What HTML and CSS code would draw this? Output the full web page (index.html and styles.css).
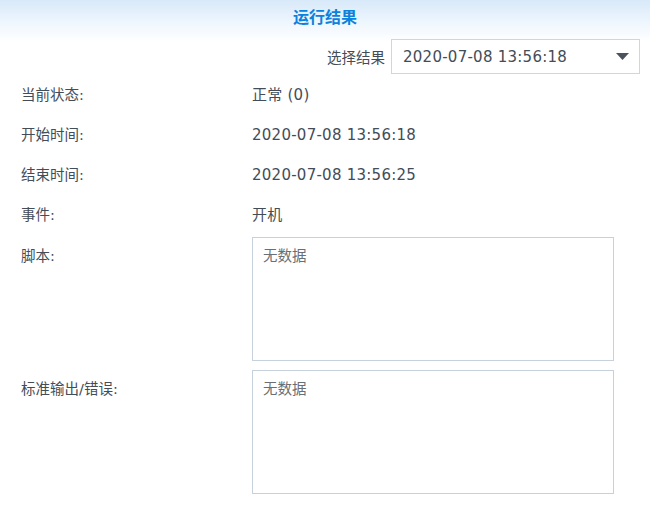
FILE: index.html
```html
<!DOCTYPE html>
<html lang="zh-CN">
<head>
  <meta charset="UTF-8">
  <title>运行结果</title>
  <link rel="stylesheet" href="styles.css">
</head>
<body>
  <div class="panel">
    <!-- Title bar -->
    <div class="panel-header">运行结果</div>

    <!-- Result picker -->
    <div class="picker-row">
      <span class="picker-label">选择结果</span>
      <div class="picker">
        <span class="picker-value">2020-07-08 13:56:18</span>
        <svg class="picker-arrow" width="13" height="7" viewBox="0 0 13 7">
          <path d="M0 0 H13 L6.5 7 Z" fill="#4a525c"/>
        </svg>
      </div>
    </div>

    <!-- Details -->
    <div class="details">
      <div class="row">
        <div class="label">当前状态:</div>
        <div class="value">正常 (0)</div>
      </div>
      <div class="row">
        <div class="label">开始时间:</div>
        <div class="value">2020-07-08 13:56:18</div>
      </div>
      <div class="row">
        <div class="label">结束时间:</div>
        <div class="value">2020-07-08 13:56:25</div>
      </div>
      <div class="row">
        <div class="label">事件:</div>
        <div class="value">开机</div>
      </div>
      <div class="row row-box">
        <div class="label">脚本:</div>
        <div class="box">无数据</div>
      </div>
      <div class="row row-box">
        <div class="label">标准输出/错误:</div>
        <div class="box">无数据</div>
      </div>
    </div>
  </div>
</body>
</html>
```

FILE: styles.css
```css
/* Shared colours and fonts */
:root {
  --title-color: #0b82dc;
  --text-color: #434d58;
  --muted-color: #6a6f75;
  --border-color: #c7d1dc;
  --font-family: "DejaVu Sans", "Noto Sans CJK SC", sans-serif;
}

body {
  margin: 0;
  background: #fff;
  font-family: var(--font-family);
  color: var(--text-color);
  font-size: 14px;
}

.panel {
  width: 650px;
  height: 508px;
  background: linear-gradient(to bottom, #d8e9f9 0px, #eef6fd 22px, #fff 42px);
}

/* Title bar */
.panel-header {
  height: 36px;
  line-height: 36px;
  text-align: center;
  font-size: 16px;
  font-weight: bold;
  color: var(--title-color);
}

/* Result picker */
.picker-row {
  display: flex;
  justify-content: flex-end;
  align-items: center;
  gap: 6px;
  margin-top: 3px;
  padding-right: 10px;
}

.picker-label {
  font-size: 14.5px;
}

.picker {
  display: flex;
  align-items: center;
  justify-content: space-between;
  box-sizing: border-box;
  width: 249px;
  height: 35px;
  padding: 0 10px 0 11px;
  border: 1px solid #cfd6de;
  background: #fff;
}

.picker-value {
  font-size: 15px;
  letter-spacing: 0.25px;
}

/* Detail rows */
.details {
  padding: 1px 0 0 21px;
}

.row {
  display: grid;
  grid-template-columns: 231px 362px;
  height: 40px;
  line-height: 40px;
}

.label {
  font-size: 14.5px;
}

.value {
  font-size: 15px;
  letter-spacing: 0.25px;
}

.row-box {
  height: auto;
  line-height: normal;
  margin-top: 2px;
}

.row-box + .row-box {
  margin-top: 9px;
}

.row-box .label {
  padding-top: 7px;
}

.box {
  box-sizing: border-box;
  height: 124px;
  padding: 6px 10px;
  border: 1px solid var(--border-color);
  background: #fff;
  font-size: 14.5px;
  color: var(--muted-color);
}
```
